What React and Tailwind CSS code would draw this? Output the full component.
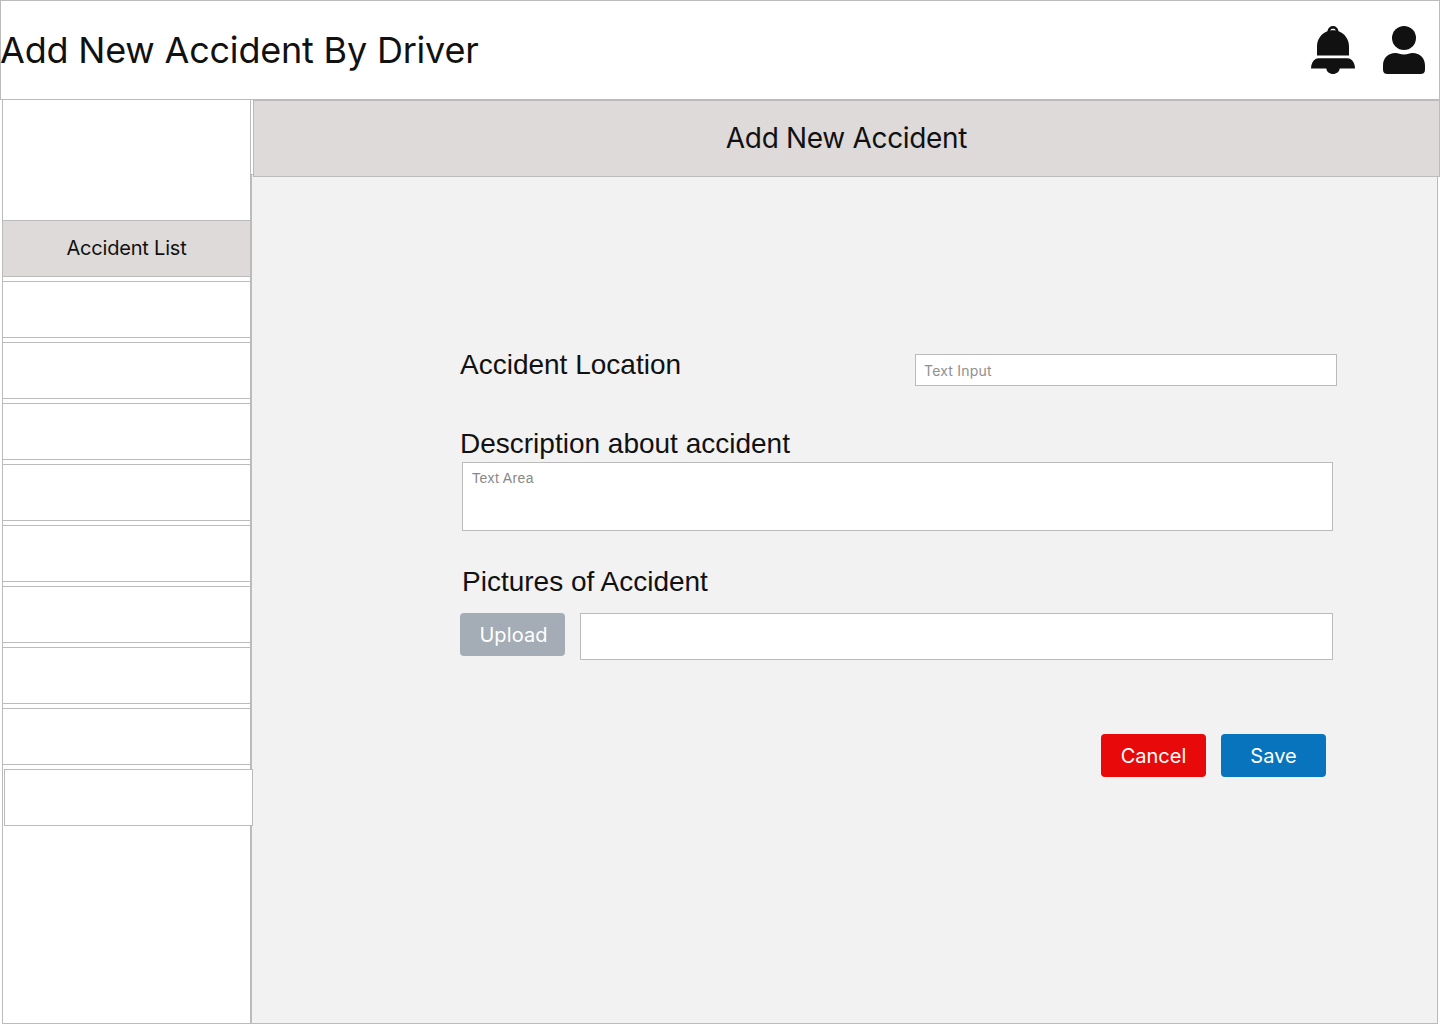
const EMPTY_ITEMS = [1, 2, 3, 4, 5, 6, 7, 8];

function BellIcon() {
  return (
    <svg width="44" height="48" viewBox="0 0 44 48" fill="#111" aria-hidden="true">
      <path
        fillRule="evenodd"
        d="M6 29.5V20.5C6 13 10.5 7.5 16.4 5.2C16.9 2 19.2 0 22 0S27.100 2 27.600 5.200C33.500 7.500 38 13 38 20.500V29.500ZM19.200 4.500C21 4.100 23 4.100 24.800 4.500C24.300 3.200 23.200 2.800 22 2.800S19.700 3.200 19.200 4.500Z"
      />
      <path d="M0 42.500C0 38 2 34.500 5 32.800Q6 32.300 7.500 32.300H36.500Q38 32.300 39 32.800C42 34.500 44 38 44 42.500H28.700C28.300 45.700 25.500 48 22 48S15.700 45.700 15.300 42.500Z" />
    </svg>
  );
}

function UserIcon() {
  return (
    <svg width="42" height="48" viewBox="0 0 42 48" fill="#111" aria-hidden="true">
      <circle cx="21" cy="12" r="12" />
      <path d="M12.500 27C15.500 27 17 28.500 21 28.500S26.500 27 29.500 27C37 27 42 32 42 39.500V43.500C42 46.500 40.500 48 37.500 48H4.500C1.500 48 0 46.500 0 43.500V39.500C0 32 5 27 12.500 27Z" />
    </svg>
  );
}

function Button({ className, children }) {
  return (
    <button className={`h-[43px] w-[105px] rounded-[4px] pt-px text-[20px] text-white ${className}`}>
      {children}
    </button>
  );
}

function Label({ className, children }) {
  return (
    <label className={`block font-['Liberation_Sans',Arial,sans-serif] text-[28px] leading-8 ${className}`}>
      {children}
    </label>
  );
}

export default function App() {
  return (
    <div className="flex h-[1024px] w-[1440px] flex-col overflow-hidden bg-white font-['Inter',sans-serif] text-[#111]">
      <header className="flex h-[100px] shrink-0 items-center justify-between border border-[#bbb] pr-[14px]">
        <h1 className="-ml-px text-[36px] leading-[44px] tracking-[-0.2px]">Add New Accident By Driver</h1>
        <div className="flex gap-7">
          <BellIcon />
          <UserIcon />
        </div>
      </header>

      <div className="flex min-h-0 flex-1">
        <aside className="ml-[2px] flex w-[249px] shrink-0 flex-col gap-1 border-x border-b border-[#bbb] pt-[120px]">
          <div className="flex h-[57px] shrink-0 items-center justify-center border-y border-[#bbb] bg-[#dddad9] pb-px text-[20px] tracking-[-0.2px]">
            Accident List
          </div>
          {EMPTY_ITEMS.map((item) => (
            <div key={item} className="h-[57px] shrink-0 border-y border-[#bbb] bg-white" />
          ))}
          <div className="relative z-10 ml-px h-[57px] w-[249px] shrink-0 border border-[#bbb] bg-white" />
        </aside>

        <main className="flex flex-1 flex-col">
          <h2 className="z-10 ml-[2px] flex h-[77px] shrink-0 items-center justify-center border border-[#bbb] bg-[#dddad9] pb-[2px] text-[28px] tracking-[-0.32px]">
            Add New Accident
          </h2>
          <form className="-mt-[3px] mr-[2px] flex-1 border border-[#bbb] bg-[#f2f2f2] pl-[208px] pt-[174px]">
            <div className="flex">
              <Label className="w-[455px]">Accident Location</Label>
              <input
                className="mt-[5px] h-8 w-[422px] border border-[#bbb] bg-white px-2 text-[14px] tracking-[0.2px] placeholder:text-[#909090]"
                placeholder="Text Input"
              />
            </div>
            <Label className="mt-[42px]">Description about accident</Label>
            <textarea
              className="ml-[2px] mt-[2px] block h-[69px] w-[871px] resize-none border border-[#bbb] bg-white px-[9px] py-[7px] font-['Liberation_Sans',Arial,sans-serif] text-[14px] leading-4 tracking-[0.4px] placeholder:text-[#888]"
              placeholder="Text Area"
            />
            <Label className="ml-[2px] mt-[35px]">Pictures of Accident</Label>
            <div className="mt-[15px] flex gap-[15px]">
              <Button className="bg-[#a4adb5] pl-[2px] tracking-[0.1px]">Upload</Button>
              <div className="h-[47px] w-[753px] border border-[#bbb] bg-white" />
            </div>
            <div className="ml-[641px] mt-[74px] flex gap-[15px]">
              <Button className="bg-[#e80a0a]">Cancel</Button>
              <Button className="bg-[#0974be]">Save</Button>
            </div>
          </form>
        </main>
      </div>
    </div>
  );
}
